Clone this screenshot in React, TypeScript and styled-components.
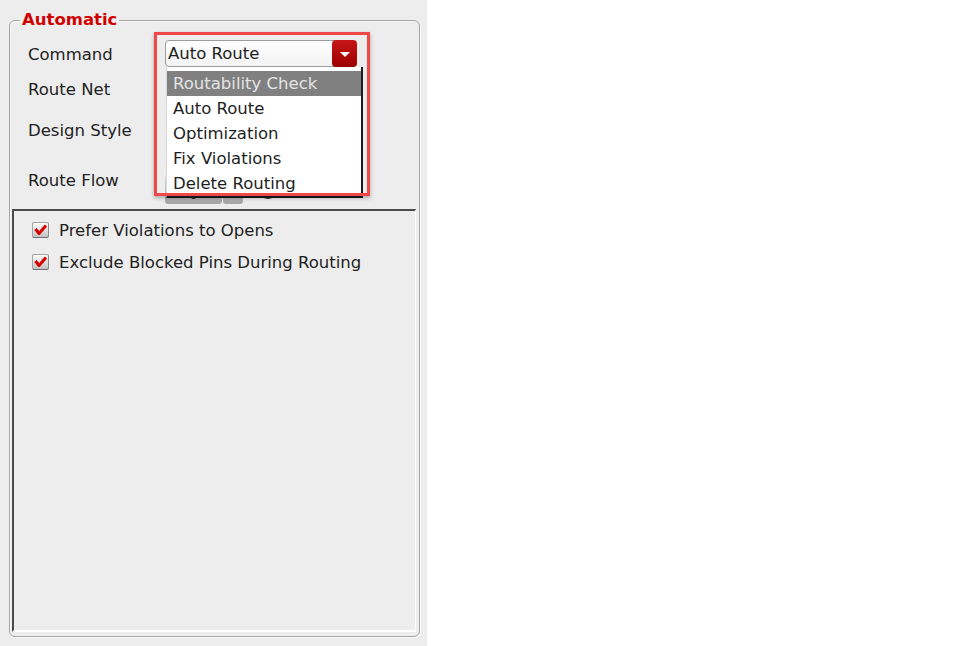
import styled, { createGlobalStyle } from "styled-components";

const GlobalStyle = createGlobalStyle`
  body {
    margin: 0;
    background: #ffffff;
  }
`;

const Page = styled.div`
  width: 427px;
  height: 646px;
  box-sizing: border-box;
  padding-left: 9px;
  background: #ededed;
  font-family: "DejaVu Sans", "Liberation Sans", sans-serif;
  font-size: 16.5px;
  color: #222;
  display: flex;
  flex-direction: column;
`;

const Group = styled.fieldset`
  margin: 11px 0 0 0;
  width: 411px;
  height: 626px;
  box-sizing: border-box;
  padding: 0;
  min-width: 0;
  border: 1px solid #a6a6a6;
  border-radius: 6px;
  box-shadow: 1px 1px 0 #fafafa, inset 1px 1px 0 #f8f8f8;
`;

const Legend = styled.legend`
  margin-left: 10px;
  padding: 0 2px;
  font-weight: bold;
  font-size: 16.5px;
  line-height: 18px;
  color: #d00000;
`;

const Form = styled.div`
  display: grid;
  grid-template-columns: 137px 1fr;
  grid-template-rows: 27px 42px 40px 60px;
  align-items: center;
  padding: 11px 0 0 18px;
`;

const Label = styled.span`
  white-space: nowrap;
  padding-top: 2px;
`;

const ComboWrap = styled.div<{ inset?: number }>`
  position: relative;
  width: ${(p) => 192 - (p.inset ?? 0)}px;
  margin-left: ${(p) => p.inset ?? 0}px;
  height: 27px;
`;

const ComboBox = styled.div`
  height: 100%;
  box-sizing: border-box;
  display: flex;
  align-items: center;
  border: 1px solid #9c9c9c;
  border-radius: 4px;
  background: linear-gradient(#ffffff, #f3f3f3);
`;

const ComboText = styled.span`
  flex: 1;
  padding-left: 2px;
  white-space: nowrap;
`;

const ComboButton = styled.div`
  width: 25px;
  height: 27px;
  margin: -1px -1px -1px 0;
  border-radius: 4px;
  background: linear-gradient(#c81616, #9c0000);
  display: flex;
  align-items: center;
  justify-content: center;
`;

const Arrow = styled.div`
  width: 0;
  height: 0;
  border-left: 5px solid transparent;
  border-right: 5px solid transparent;
  border-top: 5px solid #ffffff;
  margin-top: 2px;
`;

const List = styled.div`
  position: absolute;
  top: 27px;
  left: 1px;
  width: 197px;
  height: 131px;
  box-sizing: border-box;
  padding-top: 4px;
  background: #ffffff;
  border-left: 1px solid #d8d8d8;
  border-right: 2px solid #1c1c1c;
  border-bottom: 2px solid #1c1c1c;
  overflow: hidden;
  z-index: 2;
`;

const Item = styled.div<{ active?: boolean }>`
  height: 25px;
  line-height: 25px;
  padding-left: 6px;
  white-space: nowrap;
  background: ${(p) => (p.active ? "#808080" : "transparent")};
  color: ${(p) => (p.active ? "#e4e4e4" : "#1e1e1e")};
`;

const Callout = styled.div`
  position: absolute;
  left: -11px;
  top: -8px;
  width: 216px;
  height: 164px;
  box-sizing: border-box;
  border: 3px solid #f04848;
  box-shadow: 0 2px 4px rgba(0, 0, 0, 0.3);
  pointer-events: none;
  z-index: 3;
`;

const Radios = styled.div`
  display: flex;
  gap: 20px;
  margin-left: 6px;
`;

const Radio = styled.div`
  width: 16px;
  height: 16px;
  border-radius: 50%;
  border: 1px solid #555;
  background: linear-gradient(#f6f6f6, #c9c9c9);
`;

const FlowRow = styled.div`
  align-self: end;
  margin-bottom: 5px;
  display: flex;
  align-items: center;
  gap: 16px;
`;

const Segments = styled.div`
  display: flex;
  gap: 1px;
`;

const Segment = styled.div<{ w: number }>`
  width: ${(p) => p.w}px;
  height: 30px;
  border-radius: 3px;
  background: linear-gradient(#dedede, #a6a6a6);
  display: flex;
  align-items: flex-end;
  justify-content: center;
`;

const Dot = styled.div`
  width: 5px;
  height: 5px;
  margin-bottom: 5px;
  border-radius: 50%;
  background: #111;
`;

const FlowRadio = styled(Radio)`
  border-color: #333;
  margin-top: 2px;
`;

const Panel = styled.div`
  height: 416px;
  margin: 0 3px 0 2px;
  border-top: 2px solid #4b4b4b;
  border-left: 2px solid #4b4b4b;
  border-right: 1px solid #ffffff;
  border-bottom: 2px solid #ffffff;
  padding: 3px 0 0 18px;
  box-sizing: content-box;
`;

const CheckRow = styled.label`
  height: 32px;
  display: flex;
  align-items: center;
  gap: 10px;
  white-space: nowrap;
`;

const Box = styled.span`
  width: 17px;
  height: 16px;
  box-sizing: border-box;
  border: 1px solid #a2a2a2;
  border-bottom-color: #6e6e6e;
  border-right-color: #8a8a8a;
  border-radius: 2px;
  background: linear-gradient(#fbfbfb, #c2c2c2);
  display: flex;
`;

function Check() {
  return (
    <Box>
      <svg width="15" height="14" viewBox="0 0 15 14">
        <path
          d="M2.5 6 L6 10.5 L13 2.5"
          fill="none"
          stroke="#d40000"
          strokeWidth="3"
          strokeLinejoin="round"
        />
      </svg>
    </Box>
  );
}

const commands = [
  "Routability Check",
  "Auto Route",
  "Optimization",
  "Fix Violations",
  "Delete Routing",
];

const options = ["Prefer Violations to Opens", "Exclude Blocked Pins During Routing"];

function App() {
  return (
    <Page>
      <GlobalStyle />
      <Group>
        <Legend>Automatic</Legend>
        <Form>
          <Label>Command</Label>
          <ComboWrap>
            <ComboBox>
              <ComboText>Auto Route</ComboText>
              <ComboButton>
                <Arrow />
              </ComboButton>
            </ComboBox>
            <List>
              {commands.map((c, i) => (
                <Item key={c} active={i === 0}>
                  {c}
                </Item>
              ))}
            </List>
            <Callout />
          </ComboWrap>

          <Label>Route Net</Label>
          <ComboWrap inset={6}>
            <ComboBox>
              <ComboText />
              <ComboButton>
                <Arrow />
              </ComboButton>
            </ComboBox>
          </ComboWrap>

          <Label>Design Style</Label>
          <Radios>
            <Radio />
            <Radio />
          </Radios>

          <Label>Route Flow</Label>
          <FlowRow>
            <Segments>
              <Segment w={57}>
                <Dot />
              </Segment>
              <Segment w={20} />
            </Segments>
            <FlowRadio />
          </FlowRow>
        </Form>
        <Panel>
          {options.map((o) => (
            <CheckRow key={o}>
              <Check />
              {o}
            </CheckRow>
          ))}
        </Panel>
      </Group>
    </Page>
  );
}

export default App;
